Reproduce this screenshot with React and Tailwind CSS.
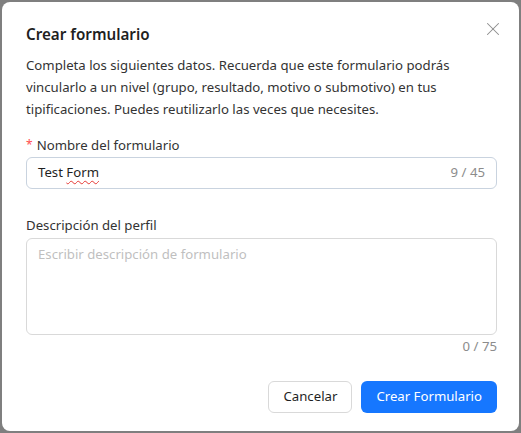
import { X } from 'lucide-react';

export default function App() {
  return (
    <div className="w-[521px] h-[433px] bg-[#7f7f7f] p-[2px] font-['Segoe_UI','Noto_Sans',sans-serif] text-[13.2px] text-[#1f1f1f]">
      <div className="relative h-full bg-white rounded-[8px] pl-[24px] pr-[22px] pt-[20px]">
        <button className="absolute right-[15px] top-[16px] text-[#8c8c8c]">
          <X size={22} strokeWidth={1.1} />
        </button>
        <h2 className="text-[15.2px] leading-[24px] font-semibold text-[#1f1f1f]">Crear formulario</h2>
        <p className="mt-[8px] pr-[2px] leading-[22px] text-[#333]">
          Completa los siguientes datos. Recuerda que este formulario podrás vincularlo a un nivel (grupo, resultado, motivo o submotivo) en tus tipificaciones. Puedes reutilizarlo las veces que necesites.
        </p>

        <div className="mt-[14px]">
          <label className="flex items-center leading-[22px] text-[#333]">
            <span className="text-[#ff4d4f] mr-[4px] text-[12px]">*</span>Nombre del formulario
          </label>
          <div className="mt-[1px] h-[32px] flex items-center border border-[#c9d3df] rounded-[6px] px-[11px]">
            <span className="flex-1">
              Test <span className="underline decoration-wavy decoration-[#e53935] decoration-1 underline-offset-[3px] [text-decoration-skip-ink:none]">Form</span>
            </span>
            <span className="text-[#8c8c8c]">9 / 45</span>
          </div>
        </div>

        <div className="mt-[25px]">
          <label className="block leading-[22px] text-[#333]">Descripción del perfil</label>
          <div className="mt-[2px] h-[97px] border border-[#d9d9d9] rounded-[6px] px-[11px] py-[4px] text-[#bfbfbf] leading-[22px]">
            Escribir descripción de formulario
          </div>
          <div className="text-right text-[#8c8c8c] leading-[22px]">0 / 75</div>
        </div>

        <div className="flex justify-end gap-[9px] mt-[24px]">
          <button className="h-[32px] px-[14px] border border-[#d9d9d9] rounded-[6px] bg-white text-[#1f1f1f]">Cancelar</button>
          <button className="h-[32px] px-[15px] rounded-[6px] bg-[#1677ff] text-white">Crear Formulario</button>
        </div>
      </div>
    </div>
  );
}
